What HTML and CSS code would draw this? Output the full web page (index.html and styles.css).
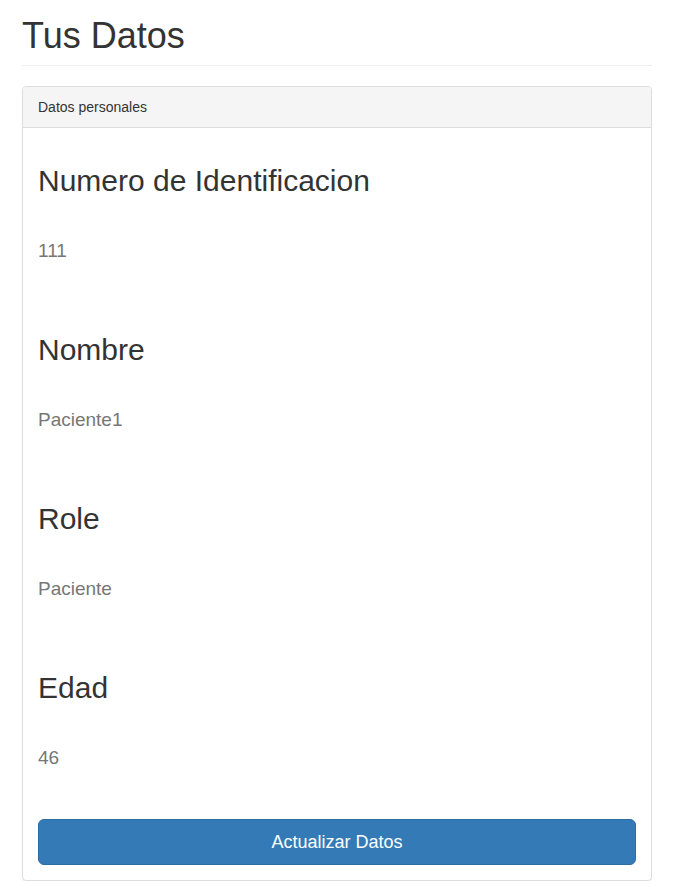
FILE: index.html
```html
<!DOCTYPE html>
<html lang="es">
<head>
<meta charset="utf-8">
<title>Tus Datos</title>
<link rel="stylesheet" href="styles.css">
</head>
<body>
<div class="container">
  <div class="page-header">
    <h1>Tus Datos</h1>
  </div>
  <div class="panel">
    <div class="panel-heading">Datos personales</div>
    <div class="panel-body">
      <div class="field">
        <h2>Numero de Identificacion</h2>
        <p class="value">111</p>
      </div>
      <div class="field">
        <h2>Nombre</h2>
        <p class="value">Paciente1</p>
      </div>
      <div class="field">
        <h2>Role</h2>
        <p class="value">Paciente</p>
      </div>
      <div class="field">
        <h2>Edad</h2>
        <p class="value">46</p>
      </div>
      <button class="btn" type="button">Actualizar Datos</button>
    </div>
  </div>
</div>
</body>
</html>
```

FILE: styles.css
```css
* { box-sizing: border-box; }
html, body { margin: 0; padding: 0; background: #fff; }
body {
  font-family: "Liberation Sans", Arial, Helvetica, sans-serif;
  font-size: 14px;
  line-height: 1.42857;
  color: #333;
}
.container { padding: 0 22px; }
.page-header {
  padding-top: 16px;
  padding-bottom: 9px;
  border-bottom: 1px solid #eee;
  margin-bottom: 20px;
}
.page-header h1 {
  margin: 0;
  font-size: 36px;
  font-weight: 500;
  line-height: 1.1;
  color: #333;
}
.panel {
  border: 1px solid #ddd;
  border-radius: 4px;
  box-shadow: 0 1px 1px rgba(0,0,0,.05);
  background: #fff;
}
.panel-heading {
  background: #f5f5f5;
  border-bottom: 1px solid #ddd;
  border-radius: 3px 3px 0 0;
  padding: 10px 15px;
  font-size: 14px;
  line-height: 20px;
  color: #333;
}
.panel-body { padding: 15px; }
.field h2 {
  margin: 21px 0 0;
  font-size: 30px;
  font-weight: 500;
  line-height: 33px;
  color: #333;
}
.field .value {
  margin: 40px 0 69px;
  font-size: 19px;
  line-height: 27px;
  color: #777;
}
.field:last-of-type .value { margin-bottom: 48px; }
.btn {
  display: block;
  width: 100%;
  margin: 0;
  padding: 10px 16px;
  font-family: inherit;
  font-size: 18px;
  line-height: 24px;
  color: #fff;
  background: #337ab7;
  border: 1px solid #2e6da4;
  border-radius: 6px;
  text-align: center;
  cursor: pointer;
}
```
